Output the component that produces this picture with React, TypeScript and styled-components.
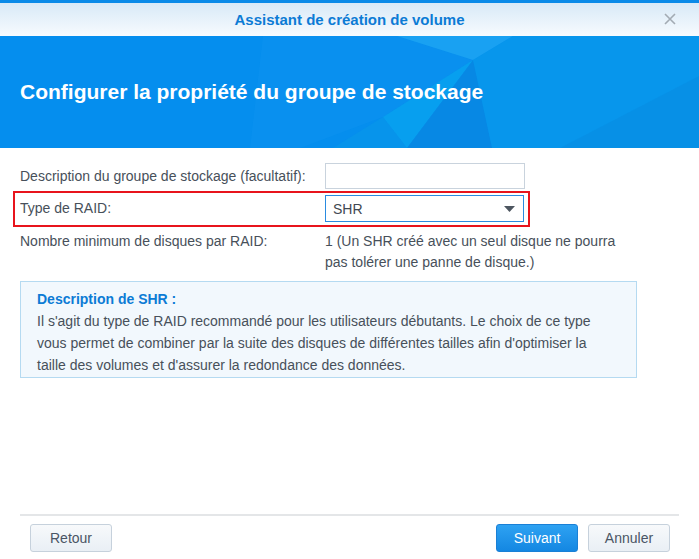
import React from 'react'
import styled, { createGlobalStyle } from 'styled-components'

const GlobalStyle = createGlobalStyle`
  html, body {
    margin: 0;
    padding: 0;
    background: #ffffff;
  }
  body {
    font-family: "Liberation Sans", Arial, sans-serif;
    color: #47505a;
  }
`

// 배너 오른쪽의 다각형 무늬
const BannerArt = () => (
  <StArt viewBox="0 0 699 112" preserveAspectRatio="none">
    <polygon points="263,0 397,0 473,24 383,81 300,112 250,112" fill="#1a9cf2" opacity="0.18" />
    <polygon points="397,0 513,0 473,24" fill="#2ab0f6" opacity="0.55" />
    <polygon points="473,24 383,81 407,112" fill="#0cb4f0" opacity="0.45" />
    <polygon points="383,81 333,112 407,112" fill="#0a9ae8" opacity="0.5" />
    <polygon points="473,24 407,112 492,112" fill="#0a80d8" opacity="0.45" />
    <polygon points="473,24 492,112 699,112 699,0 513,0" fill="#0a9ceb" opacity="0.55" />
    <polygon points="560,112 699,40 699,112" fill="#0a86dc" opacity="0.35" />
  </StArt>
)

const CloseIcon = () => (
  <svg width="12" height="12" viewBox="0 0 12 12">
    <path d="M1 1 L11 11 M11 1 L1 11" stroke="#a3abb3" strokeWidth="1.6" />
  </svg>
)

const ArrowDown = () => (
  <svg width="11" height="6" viewBox="0 0 11 6">
    <polygon points="0,0 11,0 5.5,6" fill="#4d5660" />
  </svg>
)

export default function App() {
  return (
    <>
      <GlobalStyle />
      <StDialog>
        <StTopStrip />
        <StTitleBar>
          <StTitle>Assistant de création de volume</StTitle>
          <StClose><CloseIcon /></StClose>
        </StTitleBar>
        <StBanner>
          <BannerArt />
          <StBannerTitle>Configurer la propriété du groupe de stockage</StBannerTitle>
        </StBanner>

        <StBody>
          <StRow>
            <StLabel>Description du groupe de stockage (facultatif):</StLabel>
            <StInput />
          </StRow>
          <StHighlight>
            <StLabel>Type de RAID:</StLabel>
            <StSelect>
              <span>SHR</span>
              <ArrowDown />
            </StSelect>
          </StHighlight>
          <StRow $top>
            <StLabel>Nombre minimum de disques par RAID:</StLabel>
            <StValue>1 (Un SHR créé avec un seul disque ne pourra pas tolérer une panne de disque.)</StValue>
          </StRow>

          <StInfoBox>
            <StInfoTitle>Description de SHR :</StInfoTitle>
            <StInfoText>
              Il s'agit du type de RAID recommandé pour les utilisateurs débutants. Le choix de ce type
              vous permet de combiner par la suite des disques de différentes tailles afin d'optimiser la
              taille des volumes et d'assurer la redondance des données.
            </StInfoText>
          </StInfoBox>
        </StBody>

        <StFooter>
          <StButton>Retour</StButton>
          <StSpacer />
          <StButton $primary>Suivant</StButton>
          <StButton>Annuler</StButton>
        </StFooter>
      </StDialog>
    </>
  )
}

const StDialog = styled.div`
  width: 699px;
  height: 559px;
  display: flex;
  flex-direction: column;
  overflow: hidden;
`

const StTopStrip = styled.div`
  height: 3px;
  background: #0a8ae8;
`

const StTitleBar = styled.div`
  height: 33px;
  background: linear-gradient(#d8e9f7, #f7fbfe);
  display: flex;
  align-items: center;
  justify-content: center;
  position: relative;
`

const StTitle = styled.div`
  font-size: 15px;
  font-weight: 700;
  color: #0c7bd5;
`

const StClose = styled.div`
  position: absolute;
  right: 23px;
  top: 10px;
  width: 12px;
  height: 12px;
  display: flex;
`

const StBanner = styled.div`
  height: 112px;
  background: #058eee;
  position: relative;
  display: flex;
  align-items: center;
  padding-left: 20px;
  overflow: hidden;
`

const StArt = styled.svg`
  position: absolute;
  left: 0;
  top: 0;
  width: 699px;
  height: 112px;
`

const StBannerTitle = styled.h1`
  position: relative;
  margin: 0;
  font-size: 21px;
  font-weight: 700;
  color: #ffffff;
`

const StBody = styled.div`
  flex: 1;
  padding: 15px 20px 0 20px;
  display: flex;
  flex-direction: column;
  font-size: 14px;
`

const StRow = styled.div<{ $top?: boolean }>`
  display: flex;
  align-items: ${p => (p.$top ? 'flex-start' : 'center')};
  margin-top: ${p => (p.$top ? '4px' : '0')};
`

const StHighlight = styled.div`
  display: flex;
  align-items: center;
  margin: 2px 0 0 -7px;
  width: 517px;
  box-sizing: border-box;
  padding: 2px 4px 3px 5px;
  border: 2px solid #e8141c;
`

const StLabel = styled.div`
  width: 305px;
  flex-shrink: 0;
  line-height: 21px;
`

const StInput = styled.div`
  width: 200px;
  height: 26px;
  box-sizing: border-box;
  border: 1px solid #c9d3dd;
  background: #ffffff;
`

const StSelect = styled.div`
  width: 200px;
  height: 27px;
  box-sizing: border-box;
  border: 1px solid #2a8be0;
  background: #ffffff;
  display: flex;
  align-items: center;
  justify-content: space-between;
  padding: 0 8px 0 7px;
  color: #3f4852;
`

const StValue = styled.div`
  width: 300px;
  line-height: 21px;
`

const StInfoBox = styled.div`
  margin-top: 8px;
  width: 617px;
  height: 97px;
  box-sizing: border-box;
  border: 1px solid #b5daf1;
  background: #f2f8fd;
  padding: 6px 16px 0 16px;
`

const StInfoTitle = styled.div`
  font-weight: 700;
  color: #0c7bd5;
  line-height: 22px;
`

const StInfoText = styled.div`
  max-width: 572px;
  line-height: 22px;
`

const StFooter = styled.div`
  margin: 0 20px;
  border-top: 2px solid #e4e6e8;
  padding: 8px 9px 7px 10px;
  display: flex;
  gap: 10px;
`

const StSpacer = styled.div`
  flex: 1;
`

const StButton = styled.button<{ $primary?: boolean }>`
  width: 82px;
  height: 28px;
  border-radius: 3px;
  font-family: inherit;
  font-size: 14px;
  cursor: pointer;
  border: 1px solid ${p => (p.$primary ? '#1a80d6' : '#c6d1dc')};
  background: ${p => (p.$primary ? 'linear-gradient(#2ea2f2, #1487e2)' : 'linear-gradient(#f7f9fb, #e9eff5)')};
  color: ${p => (p.$primary ? '#ffffff' : '#4a5565')};
`
